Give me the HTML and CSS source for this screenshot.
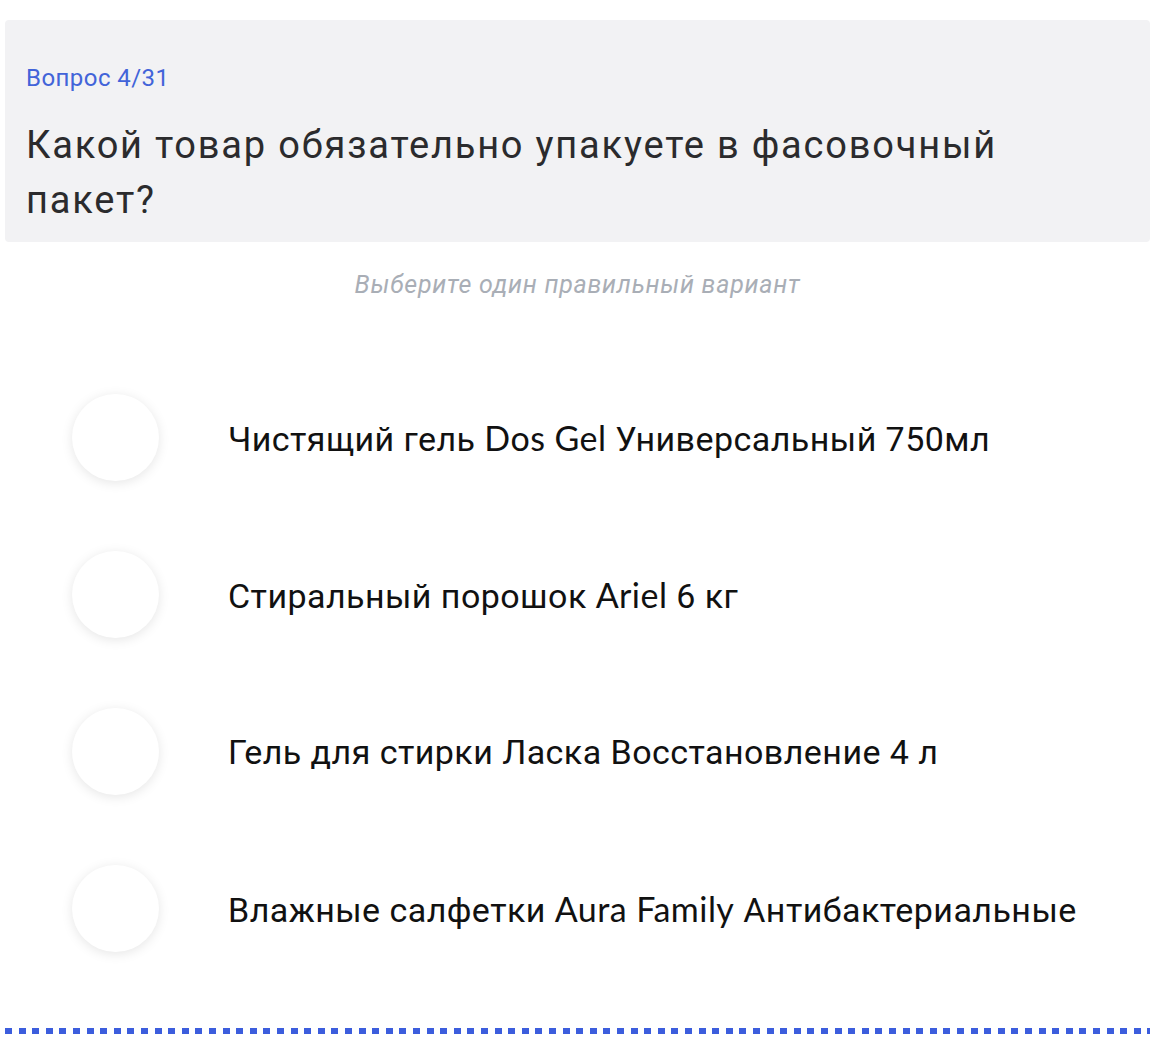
FILE: index.html
```html
<!DOCTYPE html>
<html lang="ru">
<head>
  <meta charset="UTF-8" />
  <meta name="viewport" content="width=device-width, initial-scale=1" />
  <title>Тест</title>
  <link rel="stylesheet" href="styles.css">
</head>
<body>
  <div class="quiz">
    <div class="question-card">
      <div class="question-counter">Вопрос 4/31</div>
      <h1 class="question-title">Какой товар обязательно упакуете в фасовочный пакет?</h1>
    </div>

    <p class="hint">Выберите один правильный вариант</p>

    <ul class="answers">
      <li class="answer">
        <span class="radio"></span>
        <span class="answer-text">Чистящий гель <span class="latin">Dos Gel</span> Универсальный 750мл</span>
      </li>
      <li class="answer">
        <span class="radio"></span>
        <span class="answer-text">Стиральный порошок <span class="latin">Ariel</span> 6 кг</span>
      </li>
      <li class="answer">
        <span class="radio"></span>
        <span class="answer-text">Гель для стирки Ласка Восстановление 4 л</span>
      </li>
      <li class="answer">
        <span class="radio"></span>
        <span class="answer-text">Влажные салфетки <span class="latin">Aura Family</span> Антибактериальные</span>
      </li>
    </ul>

    <div class="progress-line"></div>
  </div>
</body>
</html>
```

FILE: styles.css
```css
*, *::before, *::after {
  box-sizing: border-box;
}

body {
  margin: 0;
  background: #ffffff;
  font-family: Roboto, 'Noto Sans', sans-serif;
  color: #111111;
}

.quiz {
  padding: 20px 12px 0 5px;
}

/* Карточка вопроса */
.question-card {
  background: #f2f2f4;
  border-radius: 4px;
  padding: 44px 21px 14px;
}

.question-counter {
  font-size: 24px;
  line-height: 28px;
  letter-spacing: 0.45px;
  color: #4264d9;
}

.question-title {
  margin: 26px 0 0;
  font-size: 38px;
  line-height: 55px;
  font-weight: 400;
  letter-spacing: 1.8px;
  color: #2b2b2d;
}

.hint {
  margin: 29px 0 0;
  text-align: center;
  font-size: 25px;
  line-height: 28px;
  font-style: italic;
  letter-spacing: 0.75px;
  color: #a9aeb6;
}

/* Варианты ответа */
.answers {
  list-style: none;
  margin: 60px 0 0;
  padding: 0 0 0 67px;
}

.answer {
  display: flex;
  align-items: center;
  gap: 69px;
  height: 157px;
}

.radio {
  flex: none;
  width: 87px;
  height: 87px;
  border-radius: 50%;
  background: #ffffff;
  box-shadow: 0 2px 12px rgba(0, 0, 0, 0.1);
}

.answer-text {
  font-size: 34px;
  letter-spacing: 0.45px;
  color: #111111;
}

.latin {
  font-family: Lato, 'Open Sans', sans-serif;
}

.progress-line {
  margin-top: 41px;
  height: 6px;
  background: repeating-linear-gradient(90deg, #3c5ddd 0 7px, transparent 7px 13.6px);
}
```
